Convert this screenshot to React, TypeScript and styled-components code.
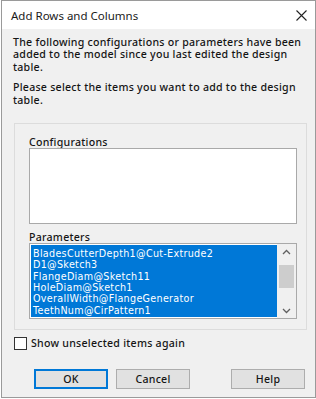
import styled, { createGlobalStyle } from 'styled-components';

const Global = createGlobalStyle`
  html, body { margin: 0; padding: 0; background: #ffffff; }
  body { font-family: "Noto Sans", "Open Sans", sans-serif; }
`;

const Window = styled.div`
  box-sizing: border-box;
  width: 315px;
  height: 398px;
  margin-left: 1px;
  border: 1px solid #9a9a9a;
  background: #f0f0f0;
  display: flex;
  flex-direction: column;
`;

const TitleBar = styled.div`
  height: 28px;
  background: #ffffff;
  display: flex;
  align-items: center;
  justify-content: space-between;
  padding: 0 8px 0 9px;
  font-size: 11.5px;
  color: #1b1b1b;
`;

const Close = styled.svg`
  width: 11px;
  height: 11px;
`;

const Body = styled.div`
  flex: 1;
  padding: 7px 8px 0 11px;
  display: flex;
  flex-direction: column;
  font-size: 10.6px;
  letter-spacing: 0.25px;
  color: #151515;
`;

const Para = styled.p<{ $gap?: number }>`
  margin: 0 0 ${(p) => p.$gap ?? 0}px;
  line-height: 12.4px;
  font-weight: 500;
`;

const Group = styled.div`
  margin-top: 17px;
  margin-left: 1px;
  width: 293px;
  height: 207px;
  box-sizing: border-box;
  border: 1px solid #dcdcdc;
  padding: 12px 9px 0 14px;
  display: flex;
  flex-direction: column;
`;

const Label = styled.div<{ $mt?: number }>`
  line-height: 12px;
  font-weight: 500;
  margin-top: ${(p) => p.$mt ?? 0}px;
`;

const ListBox = styled.div<{ $h: number }>`
  box-sizing: border-box;
  height: ${(p) => p.$h}px;
  background: #ffffff;
  border: 1px solid #a9a9a9;
  display: flex;
`;

const Items = styled.div`
  flex: 1;
  margin: 1px 0 1px 1px;
  background: #0078d7;
  color: #ffffff;
  padding: 3px 0 0 2px;
  font-family: "DejaVu Sans", "Noto Sans", sans-serif;
  font-size: 9.6px;
  letter-spacing: 0.3px;
  line-height: 11.3px;
  overflow: hidden;
`;

const Scroll = styled.div`
  width: 19px;
  background: #f0f0f0;
  display: flex;
  flex-direction: column;
  align-items: center;
  padding: 5px 0 4px;
  box-sizing: border-box;
`;

const Thumb = styled.div`
  width: 15px;
  height: 23px;
  background: #cdcdcd;
  margin-top: 10px;
`;

const Spacer = styled.div`
  flex: 1;
`;

const Chevron = styled.svg`
  width: 9px;
  height: 6px;
`;

const CheckRow = styled.label`
  display: flex;
  align-items: center;
  gap: 4px;
  margin-top: 6px;
  margin-left: 1px;
  font-weight: 500;
`;

const Box = styled.span`
  width: 13px;
  height: 13px;
  box-sizing: border-box;
  border: 1px solid #333333;
  background: #ffffff;
`;

const Buttons = styled.div`
  display: flex;
  margin-top: 19px;
  margin-left: 21px;
`;

const Button = styled.div<{ $primary?: boolean; $ml?: number }>`
  box-sizing: border-box;
  width: 74px;
  height: 20px;
  margin-left: ${(p) => p.$ml ?? 0}px;
  background: #e1e1e1;
  border: ${(p) => (p.$primary ? '2px solid #0078d7' : '1px solid #adadad')};
  display: flex;
  align-items: center;
  justify-content: center;
  font-weight: 500;
`;

const params = [
  'BladesCutterDepth1@Cut-Extrude2',
  'D1@Sketch3',
  'FlangeDiam@Sketch11',
  'HoleDiam@Sketch1',
  'OverallWidth@FlangeGenerator',
  'TeethNum@CirPattern1',
];

export default function App() {
  return (
    <>
      <Global />
      <Window>
        <TitleBar>
          <span>Add Rows and Columns</span>
          <Close viewBox="0 0 11 11">
            <path d="M0.5 0.5 L10.5 10.5 M10.5 0.5 L0.5 10.5" stroke="#222" strokeWidth="1.1" />
          </Close>
        </TitleBar>
        <Body>
          <Para $gap={8}>
            The following configurations or parameters have been added to the model since you last edited the design
            table.
          </Para>
          <Para>Please select the items you want to add to the design table.</Para>
          <Group>
            <Label>Configurations</Label>
            <ListBox $h={76} />
            <Label $mt={7}>Parameters</Label>
            <ListBox $h={76}>
              <Items>
                {params.map((p) => (
                  <div key={p}>{p}</div>
                ))}
              </Items>
              <Scroll>
                <Chevron viewBox="0 0 9 6">
                  <path d="M1 5 L4.5 1.5 L8 5" stroke="#606060" strokeWidth="1.3" fill="none" />
                </Chevron>
                <Thumb />
                <Spacer />
                <Chevron viewBox="0 0 9 6">
                  <path d="M1 1 L4.5 4.5 L8 1" stroke="#606060" strokeWidth="1.3" fill="none" />
                </Chevron>
              </Scroll>
            </ListBox>
          </Group>
          <CheckRow>
            <Box />
            Show unselected items again
          </CheckRow>
          <Buttons>
            <Button $primary>OK</Button>
            <Button $ml={8}>Cancel</Button>
            <Button $ml={41}>Help</Button>
          </Buttons>
        </Body>
      </Window>
    </>
  );
}
